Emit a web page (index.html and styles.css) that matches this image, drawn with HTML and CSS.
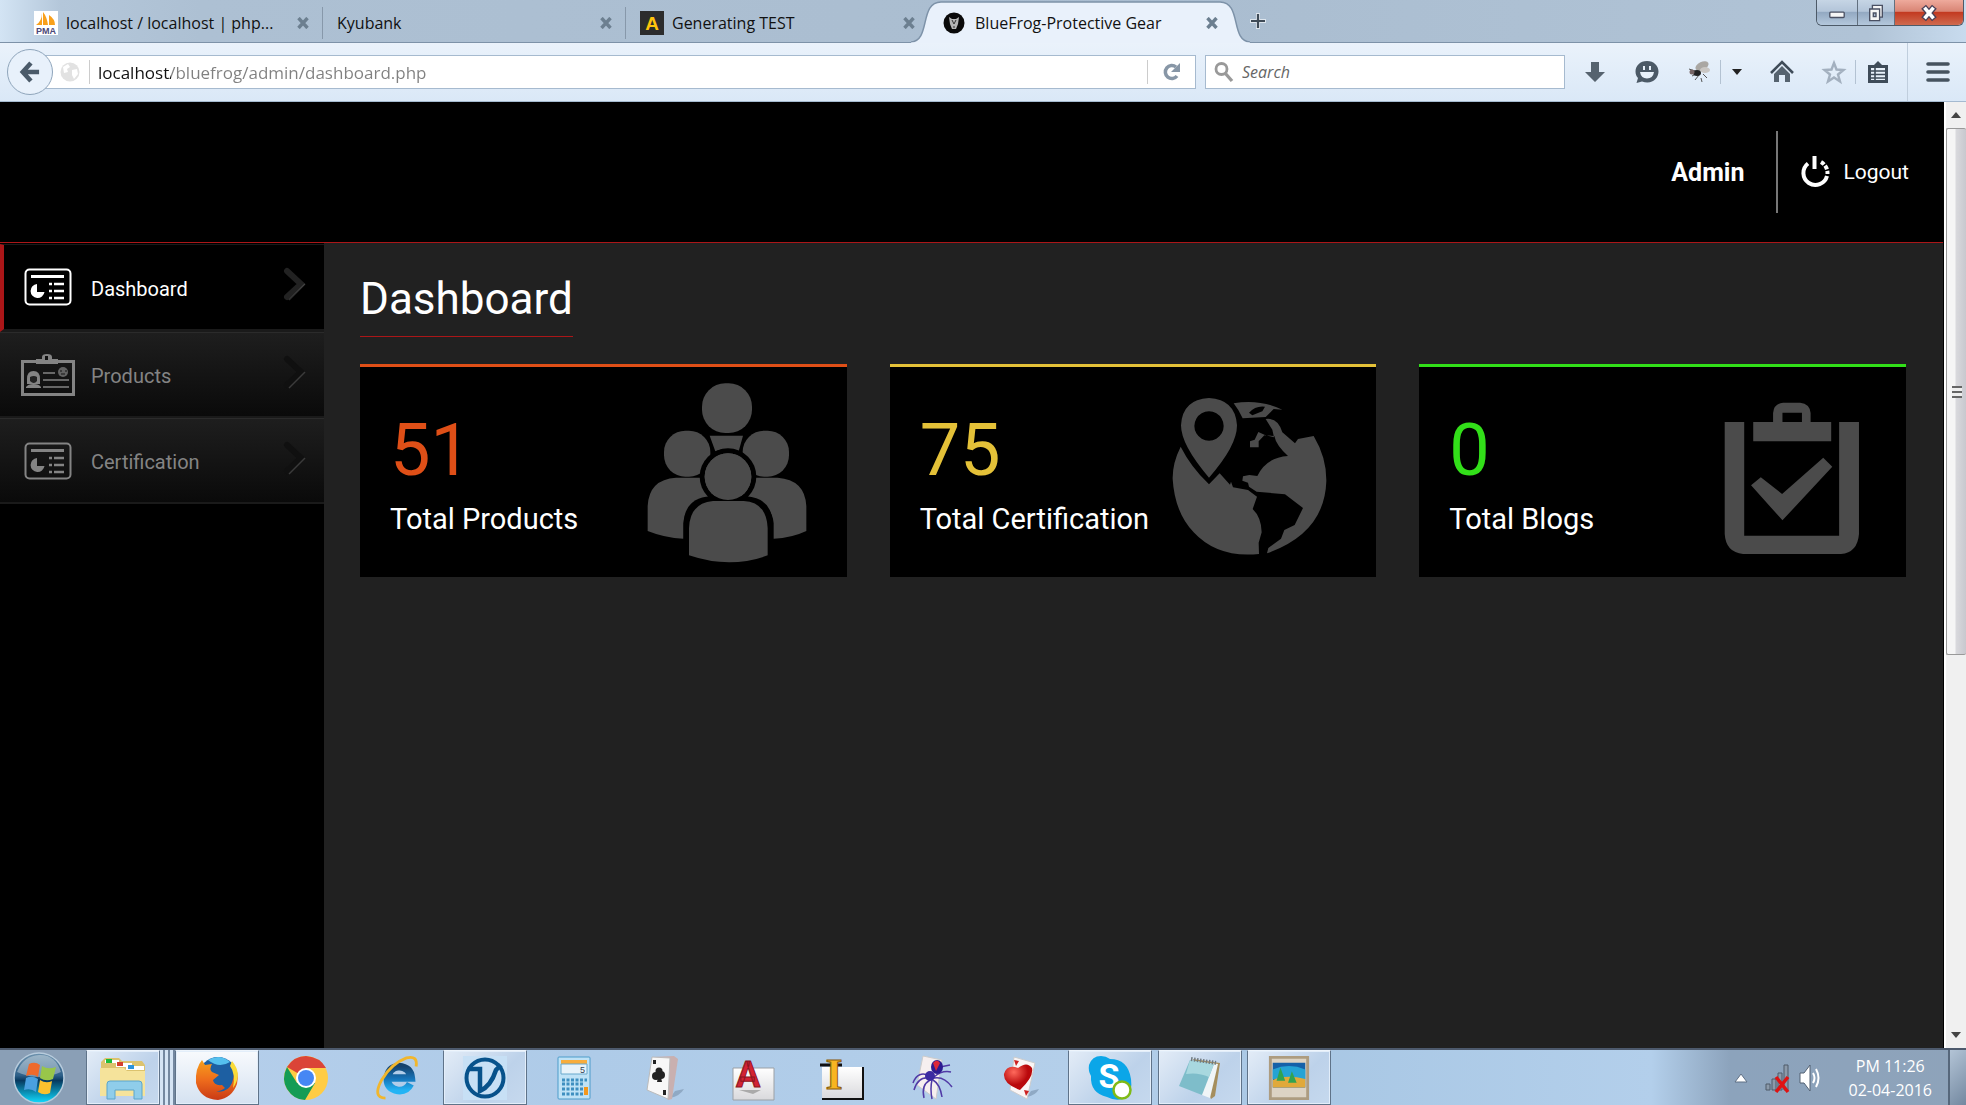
FILE: index.html
```html
<!DOCTYPE html>
<html lang="en">
<head>
<meta charset="utf-8">
<title>BlueFrog-Protective Gear</title>
<link rel="stylesheet" href="styles.css">
</head>
<body>
<svg class="defs" width="0" height="0" aria-hidden="true">
  <defs>
    <symbol id="close" viewBox="0 0 12 12"><path d="M1.5 1l9 10M10.5 1l-9 10" stroke="#6c7f90" stroke-width="3.4"/></symbol>
    <symbol id="panel" viewBox="0 0 48 38">
      <rect x="1.500" y="1.500" width="45" height="35" rx="4" fill="none" stroke="currentColor" stroke-width="2"/>
      <path d="M7 8.500h33" stroke="currentColor" stroke-width="3"/>
      <path d="M13 16v8h7.500a7 7 0 1 1-7.500-8z" fill="currentColor"/>
      <path d="M25 16h3m2 0h10M25 23h3m2 0h10M25 30h3m2 0h10" stroke="currentColor" stroke-width="2.500"/>
    </symbol>
    <symbol id="chevron" viewBox="0 0 24 34"><path d="M4 4l14 13L4 30" fill="none" stroke="currentColor" stroke-width="6" stroke-linecap="round"/><path d="M6 33L22 17" stroke="#fff" stroke-opacity=".18" stroke-width="1.500"/></symbol>
    <linearGradient id="orb" x2="0" y2="1"><stop stop-color="#6d92ad"/><stop offset=".45" stop-color="#2d5f88"/><stop offset=".55" stop-color="#07395f"/><stop offset="1" stop-color="#10dcff"/></linearGradient>
    <linearGradient id="fox" x2="0" y2="1"><stop stop-color="#f7a01c"/><stop offset=".5" stop-color="#ee6c1c"/><stop offset="1" stop-color="#c93a15"/></linearGradient>
    <linearGradient id="ie" x2="0" y2="1"><stop stop-color="#16436e"/><stop offset=".5" stop-color="#1673b8"/><stop offset="1" stop-color="#23b4f5"/></linearGradient>
    <linearGradient id="paper" x2="0" y2="1"><stop stop-color="#fff"/><stop offset="1" stop-color="#d9d9dc"/></linearGradient>
    <radialGradient id="heart" cx=".35" cy=".3"><stop stop-color="#ff6a5c"/><stop offset="1" stop-color="#b9080b"/></radialGradient>
  </defs>
</svg>

<header class="chrome">
  <div class="tabstrip">
    <div class="tab">
      <svg class="favicon" viewBox="0 0 24 24"><path fill="#fff" d="M0 0h24v24H0z"/><path d="M2 14Q8 10 8 2v12zM9 14V1q4 5 5 13zM15 14V4q6 4 6 10z" fill="#f8a01c"/><text x="12" y="23" text-anchor="middle" class="pma">PMA</text></svg>
      <span class="tab-title">localhost / localhost | php...</span>
      <button class="tab-close" aria-label="Close tab"><svg viewBox="0 0 12 12"><use href="#close"/></svg></button>
    </div>
    <div class="tab">
      <span class="tab-title">Kyubank</span>
      <button class="tab-close" aria-label="Close tab"><svg viewBox="0 0 12 12"><use href="#close"/></svg></button>
    </div>
    <div class="tab tab-last">
      <svg class="favicon" viewBox="0 0 24 24"><path fill="#2c2c2c" d="M0 0h24v24H0z"/><text x="12" y="19" text-anchor="middle" class="fav-a">A</text></svg>
      <span class="tab-title">Generating TEST</span>
      <button class="tab-close" aria-label="Close tab"><svg viewBox="0 0 12 12"><use href="#close"/></svg></button>
    </div>
    <div class="tab active">
      <svg class="tab-shape" viewBox="0 0 339 42" preserveAspectRatio="none"><path d="M0 41C20 40 8 2 30 2H309C331 2 319 40 339 41V43H0z" fill="#e9f1fb" stroke="#7d92a8" stroke-width="1.500"/><path d="M0 42h339" stroke="#e9f1fb" stroke-width="1"/></svg>
      <svg class="favicon" viewBox="0 0 24 24"><circle cx="11" cy="12" r="10.500" fill="#0a0a0a"/><path d="M6 6l3 2h4l3-2-1 7-2 5H9l-2-5z" fill="#b5b5b5"/><path d="M9 9l2 4 2-4M10 16h2" stroke="#333" fill="none"/></svg>
      <span class="tab-title">BlueFrog-Protective Gear</span>
      <button class="tab-close" aria-label="Close tab"><svg viewBox="0 0 12 12"><use href="#close"/></svg></button>
    </div>
    <button class="new-tab" aria-label="New tab"><svg viewBox="0 0 16 16"><path d="M8 0v16M0 8h16" stroke="#fff" stroke-opacity=".6" stroke-width="4"/><path d="M8 1v14M1 8h14" stroke="#3f4b57" stroke-width="2.200"/></svg></button>
    <div class="window-controls">
      <button aria-label="Minimize"><svg viewBox="0 0 20 20"><rect x="2" y="9" width="16" height="6" rx="1" fill="#f6f6f6" stroke="#4a5063" stroke-width="1.500"/></svg></button>
      <button aria-label="Restore"><svg viewBox="0 0 20 20"><path d="M6 1.500h11v13H6z" fill="#f6f6f6" stroke="#4a5063" stroke-width="1.500"/><path d="M3 5.500h11v13H3z" fill="#f6f6f6" stroke="#4a5063" stroke-width="1.500"/><path d="M7 10h3v4H7z" fill="#a9b9cf" stroke="#4a5063" stroke-width="1.500"/></svg></button>
      <button class="win-close" aria-label="Close"><svg viewBox="0 0 20 20"><path d="M4 3l12 14M16 3L4 17" stroke="#4a4057" stroke-width="7"/><path d="M5 4l10 12M15 4L5 16" stroke="#fff" stroke-width="4"/></svg></button>
    </div>
  </div>
  <div class="toolbar">
    <button class="back" aria-label="Back"><svg viewBox="0 0 22 24"><path d="M12 2L3 12l9 10M4 12h17" fill="none" stroke="#4a5a69" stroke-width="5"/></svg></button>
    <div class="urlbar">
      <svg class="site" viewBox="0 0 20 20"><circle cx="10" cy="10" r="9.500" fill="#e2e2e2"/><path d="M3 5l5-3 2 3-3 2 1 3-4 1zM12 8l5-1 1 5-4 5-2-4z" fill="#fff"/></svg>
      <input class="url" type="text" aria-label="Address" value="localhost/bluefrog/admin/dashboard.php">
      <button class="reload" aria-label="Reload"><svg viewBox="0 0 18 20"><path d="M14 14A6.500 6.500 0 1 1 13 5" fill="none" stroke="#8796a6" stroke-width="3.500"/><path d="M17 1v9H8z" fill="#8796a6"/></svg></button>
    </div>
    <div class="searchbar">
      <svg class="mag" viewBox="0 0 20 20"><circle cx="7.500" cy="7" r="5.500" fill="none" stroke="#999" stroke-width="2.800"/><path d="M11 11l7 8" stroke="#999" stroke-width="3.400"/></svg>
      <input type="search" aria-label="Search" placeholder="Search">
    </div>
    <div class="tools">
      <button aria-label="Downloads"><svg viewBox="0 0 24 24"><path d="M8 2h8v10h6L12 22 2 12h6z" fill="#56636f"/></svg></button>
      <button aria-label="Chat"><svg viewBox="0 0 24 24"><path d="M12 1C5 1 .500 6 .500 11.500c0 3 1 5 2.500 6.500L1.500 23 7 21.500c10 3.500 16.500-3 16.500-10C23.500 6 19 1 12 1z" fill="#4b5966"/><path d="M5 12h14q-1 6.500-7 6.500T5 12zM8 6h2v4H8zM14 6h2v4h-2z" fill="#e8f1fa"/></svg></button>
      <button class="bug" aria-label="Developer tools"><svg viewBox="0 0 24 24"><path d="M2 9l9 3M5 16l6-3M8 20l4-5M14 18l1 4M16 14l4 4" stroke="#555"/><ellipse cx="15" cy="6" rx="7" ry="4" fill="#aaa7a3" transform="rotate(-25 15 6)"/><ellipse cx="18" cy="10" rx="5" ry="3" fill="#c9c6c3"/><ellipse cx="10" cy="13" rx="4" ry="3" fill="#222"/><circle cx="5" cy="12" r="2.500" fill="#766"/></svg></button>
      <button class="caret" aria-label="More developer tools"><svg viewBox="0 0 12 8"><path d="M1 1h10L6 7z" fill="#222"/></svg></button>
      <button class="home" aria-label="Home"><svg viewBox="0 0 24 24"><path d="M1 13L12 2l11 11" fill="none" stroke="#3f4c59" stroke-width="2.600"/><path d="M4 14l8-8 8 8v8h-5v-7H9v7H4z" fill="#56636f"/></svg></button>
      <button class="star" aria-label="Bookmark this page"><svg viewBox="0 0 24 24"><path d="M12 3l2.500 6.500 7 .5-5.500 4.500 2 7L12 17.500 6 21.500l2-7L2.500 10l7-.5z" fill="none" stroke="#a3b0bf" stroke-width="2.400"/></svg></button>
      <button class="clip" aria-label="Bookmarks"><svg viewBox="0 0 24 24"><path d="M2 5h6l4-4 4 4h6v18H2z" fill="#3f4c59"/><path d="M5 8h14v12H5z" fill="#e8f1fa"/><path d="M5 11h14M5 14.500h14M5 18h14M9 8v12" stroke="#3f4c59" stroke-width="1.600"/></svg></button>
      <button class="menu" aria-label="Menu"><svg viewBox="0 0 24 20"><path d="M2 2h20M2 10h20M2 18h20" stroke="#46535f" stroke-width="3.600" stroke-linecap="round"/></svg></button>
    </div>
  </div>
</header>

<div class="viewport">
  <div class="page">
    <header class="site-header">
      <strong class="user">Admin</strong>
      <a class="logout" href="#"><svg viewBox="0 0 30 32"><path d="M8 7.500A12 12 0 1 0 27 20" fill="none" stroke="#fff" stroke-width="4"/><path d="M21 6a13 13 0 0 1 6.500 12" fill="none" stroke="#fff" stroke-width="4" stroke-dasharray="4 1.500"/><path d="M14.500 0v13" stroke="#fff" stroke-width="4"/></svg>Logout</a>
    </header>
    <div class="columns">
      <nav class="sidebar">
        <a class="item current" href="#"><svg class="item-icon" viewBox="0 0 48 38"><use href="#panel"/></svg><span>Dashboard</span><svg class="chevron" viewBox="0 0 24 34"><use href="#chevron"/></svg></a>
        <a class="item products" href="#"><svg class="item-icon" viewBox="0 0 54 42"><path d="M1.500 7.500h51v33H1.500z" fill="none" stroke="currentColor" stroke-width="3"/><path d="M15 10V5h6V3q0-3 5-3t5 3v2h6v5z" fill="currentColor"/><path d="M24 2h3v4h-3z" fill="#111"/><path d="M6 25q0-8 6.500-8t6.500 8v5H6z" fill="currentColor"/><path d="M9 23q4-2 7 0v4q-3 4-7 0z" fill="#222"/><path d="M5 33q2-3 7.500-3t7.500 3v1H5z" fill="currentColor"/><path d="M22 19h12M22 26h26M22 33h26" stroke="currentColor" stroke-width="1.500"/><circle cx="42" cy="18" r="5" fill="currentColor" opacity=".7"/><path d="M39 17h2m3 0h2m-6 3h4" stroke="#151515"/></svg><span>Products</span><svg class="chevron" viewBox="0 0 24 34"><use href="#chevron"/></svg></a>
        <a class="item" href="#"><svg class="item-icon" viewBox="0 0 48 38"><use href="#panel"/></svg><span>Certification</span><svg class="chevron" viewBox="0 0 24 34"><use href="#chevron"/></svg></a>
      </nav>
      <main class="content">
        <h1>Dashboard</h1>
        <div class="cards">
          <section class="card orange">
            <div class="stat"><p class="number">51</p><h2>Total Products</h2></div>
            <svg class="card-icon" viewBox="864 96 510 540" fill="#4b4b4b">
              <rect x="1053" y="100" width="150" height="149" rx="70"/>
              <path d="M1076 257h100l-13 47q-35-14-70 0z"/>
              <rect x="939" y="242" width="139" height="138" rx="64"/><rect x="1175" y="242" width="139" height="138" rx="64"/>
              <path d="M890 543v-75q4-80 85-85h305q82 6 86 85v75q-44 21-98 23v-46q-5-60-75-76h-124q-67 14-72 76v46q-55-2-107-23z"/>
              <circle cx="1131" cy="380" r="85" fill="#000"/><circle cx="1131" cy="380" r="70"/>
              <path d="M998 570v-45q0-80 80-86h108q79 6 79 86v45z" fill="#000"/>
              <circle cx="1131" cy="380" r="70"/>
              <path d="M1014 616v-82q3-75 72-81h92q69 4 72 81v82q-112 42-236 0z"/>
            </svg>
          </section>
          <section class="card yellow">
            <div class="stat"><p class="number">75</p><h2>Total Certification</h2></div>
            <svg class="card-icon" viewBox="867 96 510 540" fill="#4b4b4b">
              <path fill-rule="evenodd" d="M990 383Q906 285 906 226q4-78 84-82 79 4 84 82 0 62-84 157zM990 184a44 44 0 1 0 .1 0z"/>
              <path d="M905 290q-25 50-24 97 6 100 63 160 72 78 196 65l-1-34 9-31q-1-45-27-70l13-37-27-20-45-8-6-17-3 9-31-34-32 33q-55-53-85-113z"/>
              <path fill-rule="evenodd" d="M1064 160q76-14 146 19l-26-2-24 24-69 4q-12-26-27-45zM1110 188q20-22 48-18l-8 14-30 12z"/>
              <path d="M1160 207q37-5 50 40l38 33 9-13 47-9q39 65 38 136-5 155-178 216l4-16 38-28 10-26 31-15 25-51-54-41-85-8-23-15-3-12-17-6 2-13 19-4 24 3q27-56 92-60-36-33-41-60l-30-2-17 18v18h-26v-18l14-5 11-23 20 9 27 7-5-23z"/>
            </svg>
          </section>
          <section class="card green">
            <div class="stat"><p class="number">0</p><h2>Total Blogs</h2></div>
            <svg class="card-icon" viewBox="825 96 471 540" preserveAspectRatio="none" fill="#4b4b4b">
              <path d="M899 216h54v341h263V216h55v336q-4 56-50 60H950q-48-5-51-60z"/>
              <path fill-rule="evenodd" d="M978 216h55v-27q2-28 28-31h47q27 3 29 31v27h57v58H978zM1059 188v28h54v-28z"/>
              <path d="M972 406l27-24 59 50 114-109 25 27-138 161z"/>
            </svg>
          </section>
        </div>
      </main>
    </div>
  </div>
  <div class="scrollbar" aria-hidden="true">
    <svg viewBox="0 0 10 6"><path d="M0 6h10L5 0z" fill="#444"/></svg>
    <div class="track"><div class="thumb"><i></i></div></div>
    <svg viewBox="0 0 10 6"><path d="M0 0h10L5 6z" fill="#444"/></svg>
  </div>
</div>

<footer class="taskbar">
  <button class="start" aria-label="Start"><svg viewBox="0 0 52 52"><circle cx="26" cy="26" r="25" fill="url(#orb)" stroke="#b7cbdc" stroke-width="1.500"/><path d="M4 20Q10 4 26 3t22 17Q26 30 4 20z" fill="#fff" opacity=".35"/><path d="M16 12q6-3 11 1l-2 12q-5-4-12-1z" fill="#ee6a2c"/><path d="M29 14q6 4 14 1l-3 12q-7 3-13-1z" fill="#98c64a"/><path d="M13 26q6-3 12 1l-2 13q-5-4-12-2z" fill="#4aa0e0"/><path d="M27 28q6 4 12 1l-2 12q-6 3-12-1z" fill="#fbc12f"/></svg></button>
  <button class="explorer" aria-label="Explorer"><svg viewBox="0 0 48 44"><path d="M2 6L6 2h14l3 3h20l3 4v31H2z" fill="#dcc36e"/><path d="M6 4h14v3H6z" fill="#fff"/><path d="M7 3h6v4H7z" fill="#1dbb3a"/><path d="M17 7h16v4H17z" fill="#fff"/><path d="M18 6h6v4h-6z" fill="#d33f2e"/><path d="M27 10h18v4H27z" fill="#fff"/><path d="M29 9h6v4h-6z" fill="#2b94dc"/><path d="M1 12h24l3 3h18v25H1z" fill="#f5e39b"/><path d="M8 43V28q0-3 3-3h29q3 0 3 3v15h-8v-9H16v9z" fill="#8fcdea" stroke="#5aa5cb"/></svg></button>
  <div class="stack" aria-hidden="true"></div>
  <nav class="apps">
    <button class="running lit" aria-label="Firefox"><svg viewBox="0 0 44 44"><circle cx="23" cy="20" r="19" fill="#1d5fa2"/><path d="M13 4q12-7 22 2-11 7-22-2z" fill="#55c0ee"/><path d="M37 6q8 10 5 22-5 14-19 16Q5 43 1 27 0 12 7 4l3 5 7-1q-3 5 0 8l7 3-6 5q1 6 9 5l3 3q-6 4-10 3 12 3 17-8 4-10-1-18z" fill="url(#fox)"/><path d="M37 5q11 13 1 27 3-14-3-22z" fill="#fadb38"/></svg></button>
    <button aria-label="Chrome"><svg viewBox="0 0 44 44"><circle cx="22" cy="22" r="22" fill="#fc4"/><path d="M22 22L3 11Q10 0 22 0q14 1 20 12H22z" fill="#db4437"/><path d="M3 11q-6 12 0 22 7 11 18 11l10-17H13z" fill="#149c55"/><circle cx="22" cy="22" r="10" fill="#fff"/><circle cx="22" cy="22" r="8" fill="#4687f4"/></svg></button>
    <button aria-label="Internet Explorer"><svg viewBox="0 0 46 44"><path d="M38 28Q34 36 25 35 14 33 14 23q1-12 12-13 12 1 13 12H15" fill="none" stroke="url(#ie)" stroke-width="8"/><path d="M12 43Q-2 43 8 24 18 7 34 1q12-3 10 9" fill="none" stroke="#f1b62d" stroke-width="3"/></svg></button>
    <button class="running" aria-label="V app"><svg viewBox="0 0 44 44"><path fill="#c7e0f5" d="M0 0h44v44H0z"/><circle cx="22" cy="22" r="18.500" fill="none" stroke="#07528b" stroke-width="4"/><path d="M6 13h11v22q11-5 16-21l5-5" fill="none" stroke="#07528b" stroke-width="4.500"/></svg></button>
    <button aria-label="Calculator"><svg viewBox="0 0 44 44"><rect x="6" y="1" width="32" height="42" rx="1" fill="#bfe2f6" stroke="#4c9cca"/><path d="M9 4h26v4H9z" fill="#f8ad3c"/><path d="M9 8h26v10H9z" fill="#e8f3fa" stroke="#69a8cc"/><text x="28" y="17" class="calc-digit">5</text><path d="M10 24h25M10 28h21M10 33h21M10 38h21" stroke="#3f8fc0" stroke-width="3" stroke-dasharray="3 1.500"/><path d="M32 31h4v8h-4z" fill="#f3981d"/></svg></button>
    <button aria-label="Solitaire"><svg viewBox="0 0 44 44"><path d="M28 42q10-2 14-9l-9 2z" fill="#8fa9c4"/><path d="M12 1l20-1 4 3-6 40-4 1z" fill="#c9b0b0"/><path d="M10 1l18 1-2 41-21-9z" fill="#f7f7f7" stroke="#bbb"/><circle cx="14" cy="20" r="4" fill="#222"/><circle cx="19" cy="19" r="4" fill="#222"/><circle cx="17" cy="15" r="3.500" fill="#222"/><path d="M16 21h3l1 5h-5zM11 4h3v4h-3zM21 34h3v5h-3z" fill="#222"/></svg></button>
    <button aria-label="AutoCAD"><svg viewBox="0 0 44 44"><path d="M2 12h41v32H2z" fill="url(#paper)" stroke="#9ba0a5"/><path d="M8 34h22l-8 4z" fill="#aaa"/><text x="17" y="31" text-anchor="middle" class="letter-a">A</text></svg></button>
    <button aria-label="Inventor"><svg viewBox="0 0 44 44"><path d="M2 11h41v32H2z" fill="url(#paper)"/><path d="M2 43h41V11" fill="none" stroke="#111" stroke-width="2"/><path d="M0 9h22" stroke="#111" stroke-width="3"/><text x="14" y="33" text-anchor="middle" class="letter-i">I</text></svg></button>
    <button aria-label="Spider Solitaire"><svg viewBox="0 0 44 44"><path d="M13 0l19 4-6 39-19-14z" fill="#f6efef" stroke="#ccc"/><path d="M20 20Q8 14 3 27M20 22Q8 20 4 34M20 24q-9 5-6 18M22 24q-2 8 0 19M24 21q8-7 17-5M24 22q10-2 18 9M23 24q7 4 9 17M25 12l15-3" fill="none" stroke="#503aa6" stroke-width="1.500"/><circle cx="20" cy="20" r="5" fill="#3c2aa1"/><ellipse cx="27" cy="11" rx="6" ry="7" fill="#2c1b91"/><path d="M23 7q4-5 7 0l-4 8z" fill="#dc2738"/></svg></button>
    <button aria-label="Hearts"><svg viewBox="0 0 44 44"><path d="M28 41q9-2 12-8l-8 2z" fill="#8fa9c4"/><path d="M15 1l21 6-8 36-17-9z" fill="#faf5f5" stroke="#ccc"/><path d="M15 4l5 1-3 5zM25 34l5 1-3 5z" fill="#c22"/><path d="M21 34Q4 28 5 18q3-10 14-6 9-7 14 0 2 9-12 22z" fill="url(#heart)"/></svg></button>
    <button class="running" aria-label="Skype"><svg viewBox="0 0 44 44"><path d="M13 0q-9 0-12 9-1 6 2 11-1 17 16 21 10 5 18 1 8-5 6-19Q40 3 22 3q-4-3-9-3z" fill="#0ba6e8"/><text x="21" y="32" text-anchor="middle" class="letter-s">S</text><circle cx="34" cy="34" r="8.500" fill="#fff" stroke="#7fba16" stroke-width="2.500"/></svg></button>
    <button class="running" aria-label="Notepad"><svg viewBox="0 0 44 44"><path d="M15 3l27 4-5 33-4 3z" fill="#a58e5d"/><path d="M15 5l25 3-8 34-8-3z" fill="#f0f5f7"/><path d="M12 4l24 4-12 31L1 30z" fill="#7ebdca"/><path d="M12 4l24 4-5 13q-11-5-23-3z" fill="#a8d8df"/><path d="M13 3l25 4" stroke="#707a80" stroke-width="4" stroke-dasharray="1.500 1.500"/></svg></button>
    <button class="running" aria-label="Paint"><svg viewBox="0 0 44 46"><path d="M1 0h42v46H1z" fill="#ad9c80"/><path d="M4 3h36v40H4z" fill="#dcd3c4"/><path d="M5 7h34v26H5z" fill="#1561a8"/><path d="M5 14q17-7 34 0v10H5z" fill="#25a3d4"/><path d="M5 25q14-6 34-1v9H5z" fill="#e0a93a"/><path d="M13 12l5 14H9zM25 16l5 12h-9z" fill="#30a352"/></svg></button>
  </nav>
  <div class="tray">
    <svg class="tray-up" viewBox="0 0 14 10"><path d="M1 9l6-8 6 8z" fill="#fff" stroke="#5f7085"/></svg>
    <svg class="tray-net" viewBox="0 0 26 32"><path d="M2 22h4v6H2zM8 17h4v11H8zM14 11h4v17h-4zM20 3h4v25h-4z" fill="#8c9aaa" stroke="#4e5a68"/><path d="M12 15l12 15M24 15L12 30" stroke="#e01212" stroke-width="3.500"/></svg>
    <svg class="tray-vol" viewBox="0 0 24 32"><path d="M1 11h4l6-8v26l-6-8H1z" fill="#fff" stroke="#536173"/><path d="M14 11q3 5 0 10M17 7q5 9 0 18" fill="none" stroke="#fff" stroke-width="2"/></svg>
    <div class="clock"><time>PM 11:26</time><time>02-04-2016</time></div>
    <button class="show-desktop" aria-label="Show desktop"></button>
  </div>
</footer>
</body>
</html>
```
FILE: styles.css
```css
* { box-sizing: border-box; }
body {
  margin: 0;
  min-height: 100vh;
  display: flex;
  flex-direction: column;
  background: #000;
  font-family: Roboto, "Liberation Sans", sans-serif;
  color: #fff;
}
button { border: 0; padding: 0; background: none; font: inherit; color: inherit; display: flex; align-items: center; justify-content: center; flex: none; }
svg { display: block; flex: none; overflow: visible; }
a { color: inherit; text-decoration: none; }
h1, h2, p { margin: 0; font-weight: 400; }
.defs { position: absolute; }

/* Browser tabs and toolbar */
.chrome { font-family: "Open Sans", "Noto Sans", sans-serif; font-size: 16px; color: #111; border-bottom: 1px solid #a5bad0; }
.tabstrip {
  display: flex;
  height: 43px;
  padding-left: 20px;
  background: linear-gradient(90deg, #d3e4f4, #b4c7da 60px, #adc0d3 200px, #aabdd0 60%, #b0c3d6 95%, #c8dbee);
  border-bottom: 1px solid #7d92a8;
}
.tab { flex: 0 1 303px; min-width: 0; display: flex; align-items: center; gap: 8px; padding: 0 14px; position: relative; height: 45px; margin-bottom: -3px; }
.tab:not(.active):not(.tab-last)::after { content: ""; position: absolute; right: 0; top: 7px; bottom: 6px; width: 1px; background: #8798aa; }
.tab > * { position: relative; }
.tab > .tab-shape { position: absolute; left: -18px; top: 0; width: calc(100% + 36px); height: 43px; overflow: hidden; }
.favicon { width: 24px; height: 24px; }
.tab-title { flex: 1; white-space: nowrap; overflow: hidden; }
.tab-close svg { width: 12px; height: 12px; }
.new-tab { margin-left: 18px; }
.new-tab svg { width: 16px; height: 16px; }
.pma { font: bold 9px "Liberation Sans", sans-serif; fill: #4b4878; }
.fav-a { font: bold 19px "Liberation Sans", sans-serif; fill: #ffc40c; }
.window-controls { margin-left: auto; margin-right: 2px; display: flex; height: 26px; border: 1px solid #4d5a68; border-top: 0; border-radius: 0 0 6px 6px; overflow: hidden; }
.window-controls button { width: 41px; background: linear-gradient(#c6d5e5, #b3c5d9 45%, #93a9c2 50%, #b4c8dc); border-right: 1px solid #62707f; }
.window-controls button:nth-child(2) { width: 37px; }
.window-controls .win-close { width: 68px; border: 0; background: linear-gradient(#eeaa9c, #d98575 45%, #c33a21 50%, #cf6a4f); }
.window-controls svg { width: 18px; height: 18px; }

.toolbar { display: flex; align-items: center; height: 58px; padding: 0 16px 0 7px; background: linear-gradient(#eaf2fb, #dae8f7); }
.back { width: 46px; height: 46px; border: 1px solid #8fa5bb; border-radius: 50%; background: #e8f1fb; position: relative; }
.back svg { width: 20px; height: 22px; }
.urlbar, .searchbar { display: flex; align-items: center; height: 34px; background: #fff; border: 1px solid #a6bacf; }
.urlbar { flex: 1; margin-left: -8px; padding-left: 15px; border-left: 0; }
.site { width: 20px; height: 20px; }
.urlbar input, .searchbar input { border: 0; outline: 0; background: none; font: inherit; min-width: 0; padding: 0; flex: 1; }
.urlbar .url { margin-left: 9px; padding-left: 8px; height: 24px; font-size: 17px; border-left: 1px solid #ccc; color: transparent; background: linear-gradient(90deg, #111 81px, #808080 81px); background-clip: text; -webkit-background-clip: text; }
.reload { width: 48px; height: 24px; border-left: 1px solid #ccc; }
.reload svg { width: 18px; height: 20px; }
.searchbar { flex: 0 1 360px; margin-left: 9px; padding-left: 8px; }
.mag { width: 20px; height: 20px; }
.searchbar input { margin-left: 8px; }
.searchbar input::placeholder { color: #666; font-style: italic; opacity: 1; }
.tools { display: flex; align-items: center; padding-left: 18px; align-self: stretch; }
.tools svg { width: 24px; height: 24px; }
.tools button { width: 24px; height: 24px; margin-right: 28px; }
.tools .bug { margin-right: 9px; }
.tools .caret { width: 32px; border-left: 1px solid #b3c2d2; margin-right: 18px; }
.tools .caret svg { width: 12px; height: 8px; }
.tools .star { margin-right: 9px; }
.tools .clip { width: 38px; padding-left: 6px; border-left: 1px solid #b3c2d2; margin-right: 14px; }
.tools .menu { width: 43px; height: auto; align-self: stretch; border-left: 1px solid #c0cedd; margin: 0; justify-content: flex-end; }
.tools .menu svg { height: 20px; }

/* Page */
.viewport { flex: 1; display: flex; }
.page { flex: 1; min-width: 0; display: flex; flex-direction: column; border-right: 1px solid #000; }
.site-header { height: 141px; display: flex; align-items: center; justify-content: flex-end; padding-right: 34px; border-bottom: 1px solid #ab1618; }
.user { font-size: 25px; padding-right: 32px; }
.logout { display: flex; align-items: center; gap: 13px; height: 82px; padding-left: 22px; border-left: 2px solid #777; font-size: 21px; }
.logout svg { width: 30px; height: 32px; }
.columns { flex: 1; display: flex; }
.sidebar { flex: 0 0 324px; background: #000; padding-top: 1px; }
.item { display: flex; align-items: center; height: 86px; padding: 0 17px 0 21px; font-size: 20px; line-height: 28px; color: #848484; background: linear-gradient(#1e1e1e, #0a0a0a); border-top: 1px solid #2b2b2b; border-bottom: 2px solid #1a1a1a; }
.item.current { height: 88px; color: #fff; background: #000; border-left: 4px solid #ab1618; border-top-color: #1a1a1a; border-bottom-width: 3px; padding-left: 17px; }
.item-icon { width: 54px; height: 38px; }
.products .item-icon { height: 42px; }
.item span { flex: 1; padding: 3px 0 0 16px; }
.chevron { width: 24px; height: 34px; margin-bottom: 6px; color: #101010; }
.current .chevron { color: #222; }
.content { flex: 1; min-width: 0; background: #212121; padding: 28px 37px 28px 36px; }
h1 { display: inline-block; font-size: 44px; line-height: 56px; padding-bottom: 9px; border-bottom: 1px solid #ab1618; }
.cards { display: grid; grid-template-columns: repeat(3, 1fr); gap: 43px; margin-top: 27px; }
.card { display: flex; justify-content: space-between; align-items: center; min-height: 213px; background: #000; border-top: 3px solid; padding: 0 38px 0 30px; }
.orange { border-color: #df4f17; }
.yellow { border-color: #e4c138; }
.green { border-color: #32df19; }
.stat { align-self: flex-start; padding-top: 44px; }
.number { font-size: 72px; line-height: 80px; margin-bottom: 8px; }
.orange .number { color: #df4f17; }
.yellow .number { color: #e4c138; }
.green .number { color: #32df19; }
h2 { font-size: 29px; line-height: 40px; white-space: nowrap; }
.card-icon { width: 170px; height: 180px; }

.scrollbar { width: 22px; display: flex; flex-direction: column; align-items: center; background: #f0f0f0; border-left: 2px solid #fff; }
.scrollbar > svg { width: 10px; height: 6px; margin: 10px 0; }
.track { flex: 1; align-self: stretch; }
.thumb { height: 59%; border: 1px solid #999; border-right: 0; border-radius: 2px; background: linear-gradient(90deg, #f5f5f5 40%, #d8d8dc 50%, #c8c8ce); display: flex; align-items: center; justify-content: center; }
.thumb i { width: 10px; height: 12px; background: repeating-linear-gradient(#666 0 2px, #eee 2px 5px); }

/* Taskbar */
.taskbar { display: flex; height: 57px; border-top: 2px solid #4d5a6d; background: linear-gradient(90deg, #b8d0ec, #aecbe8 30%, #b4cfea 55%, #a8c7e4 66%, #b3cfeb 84%, #8ca3bc 88%, #8ea3ba); }
.start { width: 86px; padding-right: 8px; background: #8a9fb6; }
.start svg { width: 52px; height: 52px; }
.explorer, .running { border: 1px solid #5f7389; border-top-color: #eef5fc; box-shadow: inset 0 0 0 1px #e3eefa; background: linear-gradient(135deg, #e3ecf7, #bdd2ea 60%, #c6d9ee); }
.explorer { width: 74px; }
.explorer svg { width: 48px; height: 44px; }
.stack { width: 15px; background: repeating-linear-gradient(90deg, #d5e4f4 0 3px, #7488a0 3px 5px); }
.apps { display: flex; justify-content: space-between; flex: 0 1 1156px; }
.apps button { width: 84px; }
.apps svg { width: 44px; height: 44px; }
.apps .lit { background: linear-gradient(#f8fafd, #d5e2f1); }
.calc-digit { font: 9px "Liberation Sans", sans-serif; fill: #345; }
.letter-a { font: bold 36px Roboto, sans-serif; fill: #d32334; stroke: #8c1520; }
.letter-i { font: bold 44px "Liberation Serif", serif; fill: #f8b522; stroke: #8a5c0d; }
.letter-s { font: bold 34px Roboto, sans-serif; fill: #fff; }
.tray { margin-left: auto; display: flex; align-items: center; }
.tray-up { width: 14px; height: 10px; margin-right: 16px; }
.tray-net { width: 26px; height: 32px; margin-right: 9px; }
.tray-vol { width: 24px; height: 32px; margin-right: 26px; }
.clock { display: flex; flex-direction: column; align-items: center; font: 16px/24px "Open Sans", sans-serif; padding-right: 16px; }
.show-desktop { width: 18px; align-self: stretch; border-left: 2px solid #56677b; background: linear-gradient(135deg, #b3c4d6, #7388a0); }
```
